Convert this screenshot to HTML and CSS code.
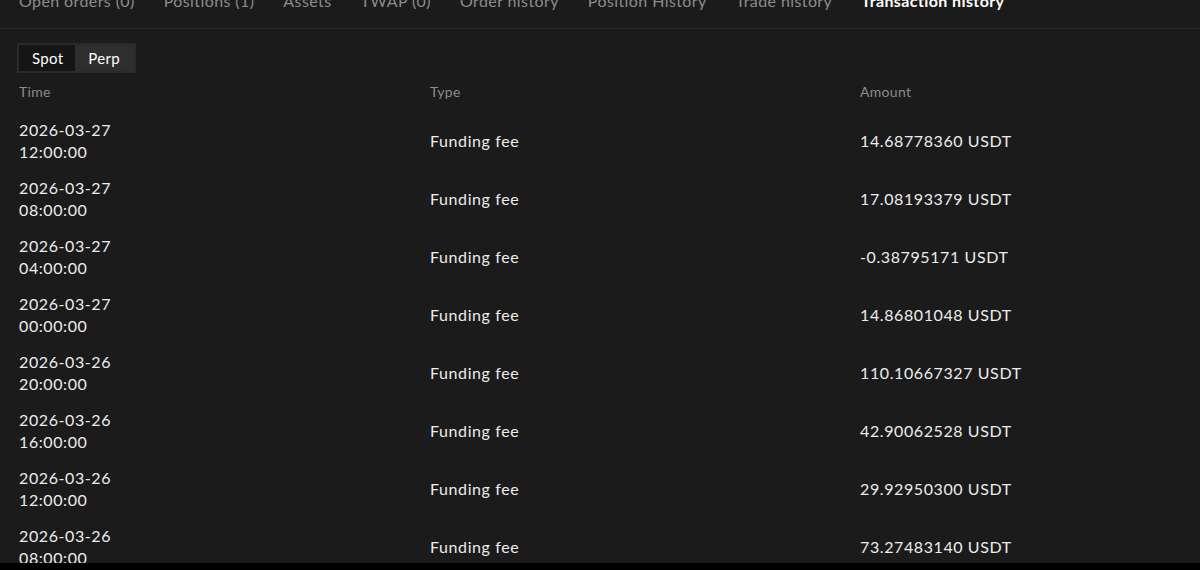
FILE: index.html
```html
<!DOCTYPE html>
<html>
<head>
<meta charset="utf-8">
<link rel="stylesheet" href="styles.css">
</head>
<body>
<div class="page">
  <nav class="tabs">
    <span class="tab">Open orders (0)</span>
    <span class="tab">Positions (1)</span>
    <span class="tab">Assets</span>
    <span class="tab">TWAP (0)</span>
    <span class="tab">Order history</span>
    <span class="tab">Position History</span>
    <span class="tab">Trade history</span>
    <span class="tab active">Transaction history</span>
  </nav>
  <div class="toggle">
    <span class="seg seg-on">Spot</span>
    <span class="seg seg-off">Perp</span>
  </div>
  <div class="table">
    <div class="row head">
      <div>Time</div><div>Type</div><div>Amount</div>
    </div>
    <div class="row">
      <div class="time">2026-03-27<br>12:00:00</div><div>Funding fee</div><div>14.68778360 USDT</div>
    </div>
    <div class="row">
      <div class="time">2026-03-27<br>08:00:00</div><div>Funding fee</div><div>17.08193379 USDT</div>
    </div>
    <div class="row">
      <div class="time">2026-03-27<br>04:00:00</div><div>Funding fee</div><div>-0.38795171 USDT</div>
    </div>
    <div class="row">
      <div class="time">2026-03-27<br>00:00:00</div><div>Funding fee</div><div>14.86801048 USDT</div>
    </div>
    <div class="row">
      <div class="time">2026-03-26<br>20:00:00</div><div>Funding fee</div><div>110.10667327 USDT</div>
    </div>
    <div class="row">
      <div class="time">2026-03-26<br>16:00:00</div><div>Funding fee</div><div>42.90062528 USDT</div>
    </div>
    <div class="row">
      <div class="time">2026-03-26<br>12:00:00</div><div>Funding fee</div><div>29.92950300 USDT</div>
    </div>
    <div class="row">
      <div class="time">2026-03-26<br>08:00:00</div><div>Funding fee</div><div>73.27483140 USDT</div>
    </div>
  </div>
</div>
</body>
</html>
```
FILE: styles.css
```css
html, body {
  margin: 0;
  padding: 0;
  background: #000;
}
body {
  font-family: Lato, "Noto Sans", sans-serif;
  color: #ececec;
  height: 570px;
  overflow: hidden;
}
.page {
  background: #1b1b1b;
  height: 563px;
  overflow: hidden;
}
.tabs {
  display: flex;
  gap: 29px;
  margin-top: -9px;
  padding: 0 19px 17px;
  line-height: 20px;
  font-size: 16px;
  letter-spacing: 0.4px;
  color: #8c8c8c;
  border-bottom: 1px solid #2c2c2c;
}
.tab.active {
  color: #fff;
  font-weight: 700;
}
.toggle {
  display: inline-flex;
  margin: 14px 0 0 17px;
  border: 2px solid #2a2a2a;
  background: #2e2e2e;
  font-size: 15px;
  line-height: 26px;
  letter-spacing: 0.3px;
}
.seg {
  color: #fff;
}
.seg-on {
  padding: 0 12px 0 13px;
  background: #151515;
}
.seg-off {
  padding: 0 14px 0 13px;
  background: #2e2e2e;
}
.table {
  margin-top: 7px;
}
.row {
  display: grid;
  grid-template-columns: 411px 430px 1fr;
  align-items: center;
  padding: 7px 0 7px 19px;
  font-size: 16px;
  line-height: 22px;
  letter-spacing: 0.6px;
}
.row.head {
  padding: 0 0 8px 19px;
  font-size: 14px;
  line-height: 24px;
  letter-spacing: 0.3px;
  color: #8c8c8c;
}
```
